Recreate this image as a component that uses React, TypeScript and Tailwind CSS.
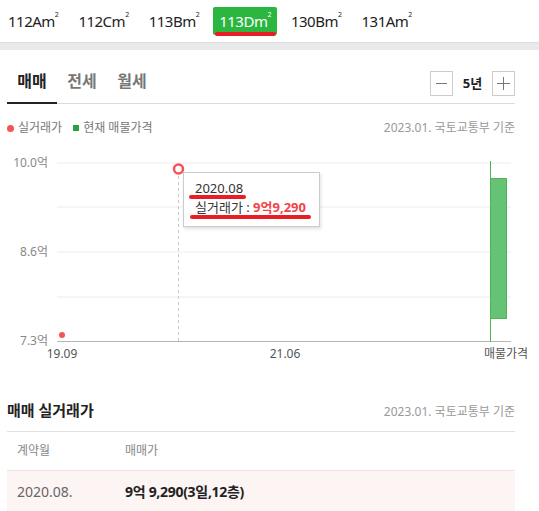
import React from "react";

const FONT = { fontFamily: '"Noto Sans", "Noto Sans CJK KR", sans-serif' };

const areas = ["112A", "112C", "113B", "113D", "130B", "131A"];

const Area = ({ name, active }: { name: string; active: boolean }) => {
  return (
    <div className="relative">
      <div
        className={
          active
            ? "h-[28px] px-[6px] flex items-center rounded-[2px] bg-[#2bb63f] text-white text-[15px] tracking-[-0.5px]"
            : "h-[28px] px-[6px] flex items-center text-[15px] tracking-[-0.5px] text-[#222]"
        }
      >
        {name}m<sup className="text-[7px] -top-[6px] relative">2</sup>
      </div>
      {active && (
        <div className="absolute left-[2px] right-[1px] bottom-[-1px] h-[4px] rounded-full bg-[#ea1c24]"></div>
      )}
    </div>
  );
};

const Chart = () => {
  const grid = [163, 207, 252, 297];
  return (
    <svg width="539" height="230" viewBox="0 136 539 230" className="block">
      {grid.map((y) => (
        <line key={y} x1="57" x2="511" y1={y} y2={y} stroke="#ececec" strokeWidth="1" />
      ))}
      <line x1="57" x2="511" y1="341.5" y2="341.5" stroke="#b5b5b5" strokeWidth="1" />
      <line x1="178.5" x2="178.5" y1="170" y2="341" stroke="#c8c8c8" strokeDasharray="3 3" />
      <g fontSize="12" fill="#888" textAnchor="end" style={{ fontFamily: '"Noto Sans", "Noto Sans CJK KR", sans-serif' }}>
        <text x="48" y="167">10.0억</text>
        <text x="48" y="256">8.6억</text>
        <text x="48" y="345">7.3억</text>
      </g>
      <g fontSize="12" fill="#555" textAnchor="middle" style={{ fontFamily: '"Noto Sans", "Noto Sans CJK KR", sans-serif' }}>
        <text x="62" y="358">19.09</text>
        <text x="285" y="358">21.06</text>
        <text x="506" y="358">매물가격</text>
      </g>
      <line x1="490.5" x2="490.5" y1="161" y2="342" stroke="#4cb55a" strokeWidth="1" />
      <rect x="490.5" y="178.5" width="16" height="140" fill="#66c274" stroke="#4cb55a" strokeWidth="1" />
      <circle cx="62" cy="335" r="3" fill="#f55454" />
      <circle cx="178.5" cy="169" r="4.5" fill="#fff" stroke="#f55454" strokeWidth="2.5" />
    </svg>
  );
};

export default function App() {
  return (
    <div className="w-[539px] h-[511px] overflow-hidden bg-white" style={FONT}>
      <div className="h-[42px] flex items-center pl-[2px] gap-[8px]">
        {areas.map((a) => (
          <Area key={a} name={a} active={a === "113D"} />
        ))}
      </div>
      <div className="h-[8px] bg-[#e8e9eb] border-t border-[#dcdcdc]"></div>

      <div className="pl-[7px] pr-[24px]">
        <div className="h-[54px] flex items-end border-b border-[#dcdcdc]">
          <div className="w-[50px] h-[44px] -mb-px flex items-center justify-center border-b-2 border-[#222] text-[16px] font-bold text-[#222]">
            매매
          </div>
          <div className="w-[50px] h-[44px] flex items-center justify-center text-[16px] font-bold text-[#777]">
            전세
          </div>
          <div className="w-[50px] h-[44px] flex items-center justify-center text-[16px] font-bold text-[#777]">
            월세
          </div>
          <div className="ml-auto mb-[7px] flex items-center">
            <button className="w-[23px] h-[25px] border border-[#ccc] flex items-center justify-center text-[#777]">
              <svg width="11" height="11" viewBox="0 0 11 11">
                <line x1="0" x2="11" y1="5.5" y2="5.5" stroke="#777" strokeWidth="1" />
              </svg>
            </button>
            <span className="w-[39px] text-center text-[13px] font-bold text-[#222]">5년</span>
            <button className="w-[23px] h-[25px] border border-[#ccc] flex items-center justify-center">
              <svg width="13" height="13" viewBox="0 0 13 13">
                <line x1="0" x2="13" y1="6.5" y2="6.5" stroke="#777" strokeWidth="1" />
                <line x1="6.5" x2="6.5" y1="0" y2="13" stroke="#777" strokeWidth="1" />
              </svg>
            </button>
          </div>
        </div>

        <div className="h-[32px] pt-[16px] flex items-center text-[12px] leading-[16px]">
          <span className="w-[7px] h-[7px] rounded-full bg-[#f55454]"></span>
          <span className="ml-[4px] text-[#777]">실거래가</span>
          <span className="ml-[11px] w-[6px] h-[6px] bg-[#2ca03c]"></span>
          <span className="ml-[4px] text-[#777]">현재 매물가격</span>
          <span className="ml-auto text-[#999]">2023.01. 국토교통부 기준</span>
        </div>
      </div>

      <div className="relative">
        <Chart />
        <div className="absolute left-[183px] top-[36px] w-[137px] h-[55px] bg-white border border-[#ccc] shadow-[1px_2px_3px_rgba(0,0,0,0.12)] pl-[11px] pt-[6px] text-[13px] leading-[18px] text-[#333]">
          <div className="relative w-fit">
            2020.08
            <div className="absolute left-[-6px] right-[-3px] bottom-[-2px] h-[4px] rounded-full bg-[#ea1c24]"></div>
          </div>
          <div className="relative w-fit mt-[1px]">
            실거래가 : <span className="font-bold text-[#f4424b]">9억9,290</span>
            <div className="absolute left-[-5px] right-[-5px] bottom-[-3px] h-[4px] rounded-full bg-[#ea1c24]"></div>
          </div>
        </div>
      </div>

      <div className="pl-[7px] pr-[24px]">
        <div className="h-[66px] flex items-end justify-between border-b border-[#e2e2e2] pb-[9px]">
          <span className="text-[15px] font-bold text-[#222] leading-[24px]">매매 실거래가</span>
          <span className="text-[12px] text-[#999] leading-[20px]">2023.01. 국토교통부 기준</span>
        </div>
        <div className="h-[39px] flex items-center border-b border-[#f2e2e2] text-[12px] text-[#888]">
          <span className="w-[118px] pl-[10px]">계약월</span>
          <span>매매가</span>
        </div>
        <div className="h-[40px] flex items-center bg-[#fdf4f4] text-[14px]">
          <span className="w-[118px] pl-[10px] text-[#666]">2020.08.</span>
          <span className="font-bold text-[#222] tracking-[-0.3px]">9억 9,290(3일,12층)</span>
        </div>
      </div>
    </div>
  );
}
